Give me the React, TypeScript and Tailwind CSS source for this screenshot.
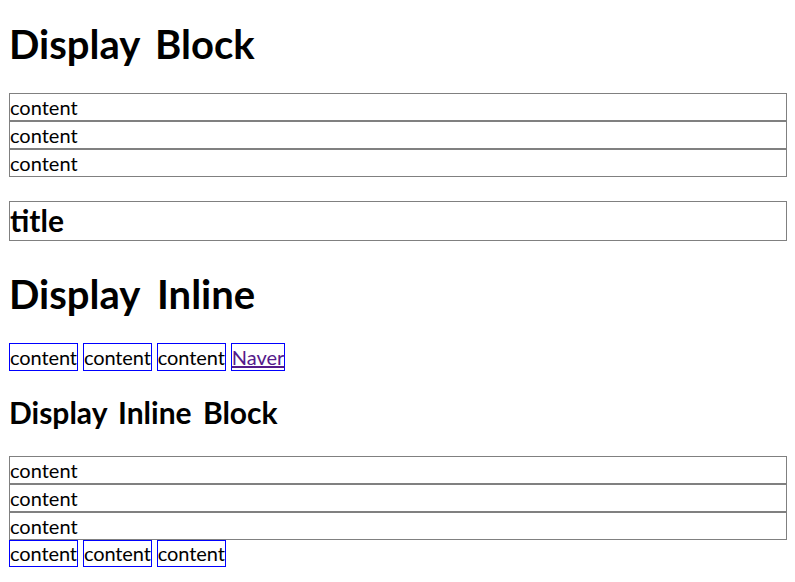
export default function App() {
  const rows = ['content', 'content', 'content'];

  return (
    <div className="min-h-screen bg-white pl-[9px] pr-[8px] font-['Lato',sans-serif] text-[20px] text-black">
      {/* Display Block */}
      <h1 className="mt-[20px] text-[40px] font-bold leading-[48px] [word-spacing:6px]">Display Block</h1>
      <div className="mt-[25px]">
        {rows.map((r, i) => (
          <div key={i} className="h-[28px] border border-[#808080] leading-[26px]">{r}</div>
        ))}
      </div>
      <div className="mt-[24px] h-[40px] border border-[#808080]">
        <h2 className="text-[30px] font-bold leading-[36px]">title</h2>
      </div>

      {/* Display Inline */}
      <h1 className="mt-[29px] text-[40px] font-bold leading-[48px] [word-spacing:8px]">Display Inline</h1>
      <div className="mt-[25px] flex gap-[5px]">
        {rows.map((r, i) => (
          <span key={i} className="h-[28px] border border-[#0000ff] leading-[26px] tracking-[-0.1px]">{r}</span>
        ))}
        <a href="#" className="h-[28px] border border-[#0000ff] leading-[26px] text-[#551a8b] underline">Naver</a>
      </div>

      {/* Display Inline Block */}
      <h2 className="mt-[23px] text-[30px] font-bold leading-[36px] [word-spacing:4px]">Display Inline Block</h2>
      <div className="mt-[26px]">
        {rows.map((r, i) => (
          <div key={i} className="h-[28px] border border-[#808080] leading-[26px]">{r}</div>
        ))}
      </div>
      <div className="flex gap-[5px]">
        {rows.map((r, i) => (
          <span key={i} className="h-[27px] border border-[#0000ff] leading-[25px] tracking-[-0.1px]">{r}</span>
        ))}
      </div>
    </div>
  );
}
